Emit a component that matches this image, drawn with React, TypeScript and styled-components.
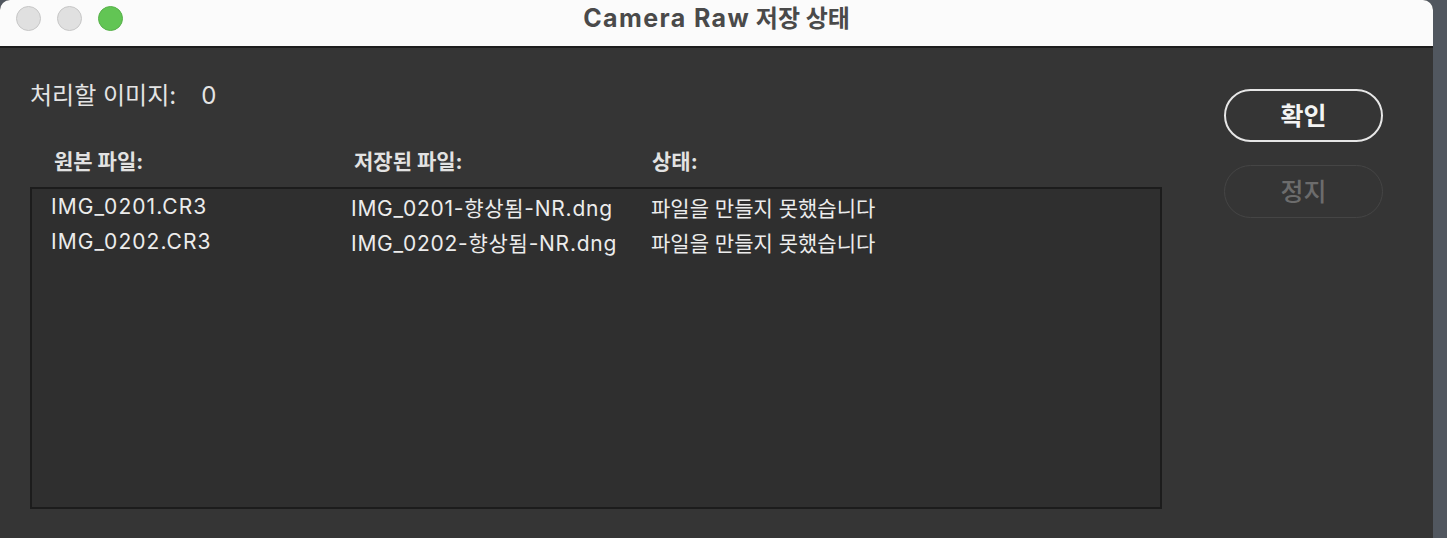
import React from "react";
import styled, { createGlobalStyle } from "styled-components";

const Global = createGlobalStyle`
  html, body { margin: 0; padding: 0; }
  body {
    background: #4d535b;
    font-family: Inter, "Noto Sans CJK KR", sans-serif;
    overflow: hidden;
  }
`;

const Desktop = styled.div`
  width: 1447px;
  height: 538px;
  display: flex;
  background: #51575f;
`;

const Window = styled.div`
  width: 1433px;
  height: 538px;
  display: flex;
  flex-direction: column;
  border-top-left-radius: 10px;
  border-top-right-radius: 10px;
  overflow: hidden;
  background: #353535;
`;

const TitleBar = styled.div`
  height: 46px;
  flex-shrink: 0;
  background: #fbfbfb;
  border-bottom: 2px solid #1d1d1d;
  display: flex;
  align-items: center;
  position: relative;
`;

const Lights = styled.div`
  display: flex;
  gap: 16px;
  padding-left: 16px;
  margin-top: -10px;
`;

const Light = styled.span<{ $color: string; $border: string }>`
  width: 23px;
  height: 23px;
  border-radius: 50%;
  background: ${(p) => p.$color};
  border: 1px solid ${(p) => p.$border};
`;

const Title = styled.div`
  position: absolute;
  left: 0;
  right: 0;
  top: -1px;
  text-align: center;
  font-size: 24px;
  font-weight: 700;
  color: #4a4a4a;
`;

const TitleLatin = styled.span`
  letter-spacing: 1.4px;
  font-size: 25px;
`;

const Body = styled.div`
  flex: 1;
  display: flex;
  padding: 0 50px 0 30px;
`;

const Main = styled.div`
  width: 1133px;
  display: flex;
  flex-direction: column;
`;

const Count = styled.div`
  margin-top: 28px;
  height: 30px;
  font-size: 24px;
  color: #e4e4e4;
  display: flex;
  align-items: baseline;
  gap: 25px;
`;

const HeaderRow = styled.div`
  display: grid;
  grid-template-columns: 300px 298px 1fr;
  padding-left: 24px;
  margin-top: 39px;
  height: 28px;
  font-size: 21px;
  font-weight: 700;
  color: #e2e2e2;
`;

const List = styled.div`
  margin-top: 14px;
  height: 322px;
  background: #2f2f2f;
  border: 2px solid #1c1c1c;
  padding-top: 0;
  box-sizing: border-box;
`;

const Row = styled.div`
  display: grid;
  grid-template-columns: 300px 300px 1fr;
  padding-left: 19px;
  height: 35px;
  align-items: center;
  font-size: 21px;
  color: #ececec;
`;

const Cell = styled.span<{ $track: number }>`
  letter-spacing: ${(p) => p.$track}px;
  white-space: nowrap;
`;

const Side = styled.div`
  margin-left: 62px;
  display: flex;
  flex-direction: column;
  gap: 23px;
  padding-top: 41px;
`;

const Button = styled.button<{ $primary?: boolean }>`
  width: 159px;
  height: 53px;
  border-radius: 27px;
  background: transparent;
  box-sizing: border-box;
  border: ${(p) => (p.$primary ? "2px solid #e6e6e6" : "1.5px solid #454545")};
  color: ${(p) => (p.$primary ? "#f4f4f4" : "#6c6c6c")};
  font-family: "Noto Sans CJK KR", sans-serif;
  font-size: 25px;
  font-weight: ${(p) => (p.$primary ? 700 : 500)};
  padding: 0 0 3px;
  line-height: 1;
`;

const rows = [
  ["IMG_0201.CR3", "IMG_0201-향상됨-NR.dng", "파일을 만들지 못했습니다"],
  ["IMG_0202.CR3", "IMG_0202-향상됨-NR.dng", "파일을 만들지 못했습니다"],
];

export default function App() {
  return (
    <>
      <Global />
      <Desktop>
        <Window>
          <TitleBar>
            <Lights>
              <Light $color="#e0e0e0" $border="#c6c6c6" />
              <Light $color="#e0e0e0" $border="#c6c6c6" />
              <Light $color="#62c554" $border="#57b04a" />
            </Lights>
            <Title>
              <TitleLatin>Camera Raw</TitleLatin> 저장 상태
            </Title>
          </TitleBar>
          <Body>
            <Main>
              <Count>
                <span>처리할 이미지:</span>
                <span>0</span>
              </Count>
              <HeaderRow>
                <span>원본 파일:</span>
                <span>저장된 파일:</span>
                <span>상태:</span>
              </HeaderRow>
              <List>
                {rows.map((r) => (
                  <Row key={r[0]}>
                    <Cell $track={1.05}>{r[0]}</Cell>
                    <Cell $track={0.75}>{r[1]}</Cell>
                    <Cell $track={0}>{r[2]}</Cell>
                  </Row>
                ))}
              </List>
            </Main>
            <Side>
              <Button $primary>확인</Button>
              <Button disabled>정지</Button>
            </Side>
          </Body>
        </Window>
      </Desktop>
    </>
  );
}
